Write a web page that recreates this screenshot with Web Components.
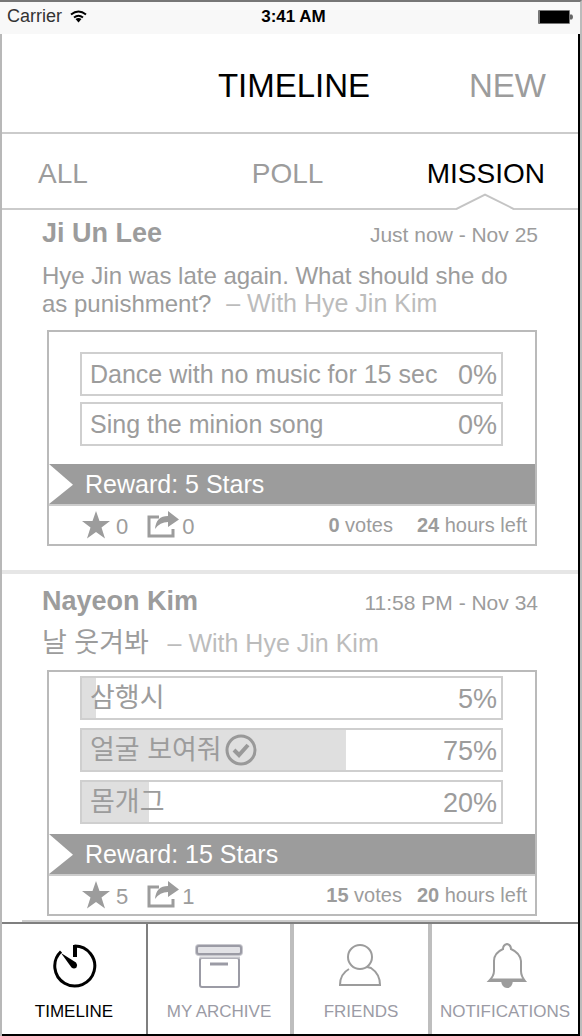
<!DOCTYPE html>
<html lang="en">
<head>
<meta charset="utf-8">
<meta name="viewport" content="width=device-width, initial-scale=1">
<title>Timeline</title>
<style>
  html, body { margin: 0; }
  body {
    font-family: "Liberation Sans", "Noto Sans CJK KR", sans-serif;
    color: #9c9c9c;
    background: #fff;
  }
</style>
</head>
<body>
<timeline-app></timeline-app>

<script>
function define(name, html, setup) {
  const template = document.createElement("template");
  template.innerHTML = html;
  customElements.define(name, class extends HTMLElement {
    connectedCallback() {
      if (this.shadowRoot) return;
      this.attachShadow({ mode: "open" }).append(template.content.cloneNode(true));
      if (setup) setup(this, this.shadowRoot);
    }
  });
}

define("status-bar", `
  <style>
    :host { display: grid; grid-template-columns: 1fr auto 1fr; align-items: center;
      padding: 0 6px 3px 7px; background: #f8f8f8; border-top: 2px solid #767676;
      border-right: 2px solid #bbb; box-sizing: border-box; height: 34px; color: #000; }
    .carrier { display: flex; align-items: center; gap: 8px; font-size: 18px; color: #333; }
    .time { font-size: 17px; font-weight: bold; padding-left: 6px; }
    .battery { justify-self: end; }
    svg { display: block; }
  </style>
  <div class="carrier"><span>Carrier</span>
    <svg width="17" height="13" viewBox="0 0 17 13" fill="none" stroke="#000" stroke-width="2">
      <path d="M1 4.5Q8.500-1.500 16 4.500"/><path d="M4 7.500Q8.500 4 13 7.500"/><path d="M5.500 9L8.500 12.500L11.500 9Q8.500 7 5.500 9Z" fill="#000" stroke="none"/>
    </svg></div>
  <div class="time">3:41 AM</div>
  <svg class="battery" width="36" height="14" viewBox="0 0 36 14">
    <rect x="0" y="0" width="32" height="14" rx="1" fill="#777"/><rect x="2" y="1" width="29" height="12" fill="#000"/>
    <path d="M32 4.500h2q2 2.500 0 5h-2z" fill="#666"/>
  </svg>`);

define("title-bar", `
  <style>
    :host { display: grid; grid-template-columns: 1fr auto 1fr; align-items: center; height: 100px;
      box-sizing: border-box; padding: 6px 32px 0 40px; border-bottom: 2px solid #cbcbcb; font-size: 33px; }
    h1 { grid-column: 2; margin: 0; font-size: 33px; font-weight: normal; color: #000; }
    button { justify-self: end; font: inherit; color: inherit; background: none; border: 0; padding: 0; }
  </style>
  <h1>TIMELINE</h1><button type="button">NEW</button>`);

define("feed-tabs", `
  <style>
    nav { display: grid; grid-template-columns: 27fr auto 28fr; align-items: center; height: 76px;
      box-sizing: border-box; padding: 6px 33px 0 36px; border-bottom: 2px solid #cbcbcb; font-size: 28px; }
    :host { display: block; }
    a { position: relative; justify-self: start; color: inherit; text-decoration: none; line-height: 68px; }
    a:last-child { justify-self: end; color: #000; }
    svg { position: absolute; left: 50%; bottom: -2px; margin-left: -30px; }
  </style>
  <nav><a href="#all">ALL</a><a href="#poll">POLL</a><a href="#mission" aria-current="page">MISSION
    <svg width="58" height="17" viewBox="0 0 58 17"><path d="M0 17L29 2L58 17" fill="#fff"/><path d="M0 16L29 1.500L58 16" fill="none" stroke="#c4c4c4" stroke-width="2"/></svg>
  </a></nav>`);

define("feed-post", `
  <style>
    :host { display: block; padding: 8px 40px 0; }
    header { display: flex; justify-content: space-between; align-items: baseline; height: 30px; line-height: 30px; }
    h2 { margin: 0; font-size: 27px; }
    .date { font-size: 21px; }
    p { margin: 14px 0 12px; font-size: 24px; line-height: 28px; max-width: 480px; min-height: 28px; }
    ::slotted([slot="with"]) { font-size: 25px; line-height: 20px; color: #bcbcbc; margin-left: 8px; white-space: nowrap; }
    ::slotted([slot="message"]:lang(ko)) { font-size: 27px; line-height: 20px; margin-right: 4px; }
  </style>
  <header><h2><slot name="author"></slot></h2><span class="date"><slot name="date"></slot></span></header>
  <p><slot name="message"></slot> <slot name="with"></slot></p>
  <slot></slot>`);

define("mission-card", `
  <style>
    :host { display: block; margin: 0 1px 0 5px; border: 2px solid #bababa; }
    .options { display: flex; flex-direction: column; gap: var(--gap, 6px); padding: var(--top, 20px) 32px var(--bottom, 18px) 31px; }
    .reward { display: flex; align-items: center; gap: 12px; height: 40px; background: #9c9c9c; color: #fff;
      font-size: 25px; border-bottom: 2px solid #ccc; }
    .reward::before { content: ""; width: 24px; height: 40px; background: #fff; clip-path: polygon(0 0, 100% 52%, 0 100%); }
    footer { display: flex; align-items: center; height: 38px; padding: 0 8px 0 32px; font-size: 20px; }
    button { display: flex; align-items: center; gap: 5px; padding: 0; border: 0; margin-right: 18px;
      background: none; color: inherit; font: inherit; font-size: 22px; height: 38px; }
    button span { padding-top: 4px; }
    button + button { margin-right: auto; gap: 2px; }
    .votes { margin-right: var(--space, 24px); }
    svg { display: block; }
  </style>
  <div class="options"><slot></slot></div>
  <div class="reward"><slot name="reward"></slot></div>
  <footer>
    <button type="button" aria-label="Stars"><svg width="30" height="30" viewBox="0 0 30 30"><path fill="#9c9c9c" d="M15 1L18.500 11H29L20.500 17.500L24 28.500L15 22L6 28.500L9.500 17.500L1 11H11.500Z"/></svg><span><slot name="stars"></slot></span></button>
    <button type="button" aria-label="Shares"><svg width="34" height="30" viewBox="0 0 34 30"><path d="M13 7H3V26H27V19" fill="none" stroke="#9c9c9c" stroke-width="3"/><path fill="#9c9c9c" d="M9 19Q10 6 22 6V1L33 9.500L22 17V12Q14 12 9 19Z"/></svg><span><slot name="shares"></slot></span></button>
    <span class="votes"><slot name="votes"></slot></span><span><slot name="left"></slot></span>
  </footer>`);

define("mission-option", `
  <style>
    :host { display: flex; align-items: center; height: 44px; box-sizing: border-box; border: 2px solid #cfcfcf;
      padding: 0 4px 0 8px; font-size: 25px;
      background: linear-gradient(#dfdfdf, #dfdfdf) no-repeat 0 0 / var(--fill, 0) 100%; }
    :host(:lang(ko)) { font-size: 27px; line-height: 40px; }
    .label { white-space: nowrap; }
    .percent { margin-left: auto; font-size: 27px; padding-top: 2px; }
    svg { display: none; margin-left: 3px; }
    :host([chosen]) svg { display: block; }
  </style>
  <span class="label"><slot></slot></span>
  <svg width="32" height="32" viewBox="0 0 32 32" fill="none" stroke="#999" role="img" aria-label="Chosen">
    <circle cx="16" cy="16" r="14" stroke-width="3"/><path d="M9 16L14 21L23 11" stroke-width="4"/></svg>
  <span class="percent"></span>`,
  (host, root) => { root.querySelector(".percent").textContent = host.getAttribute("percent") + "%"; });

define("nav-item", `
  <style>
    :host { display: block; box-sizing: border-box; border-right: 4px solid #bebebe; color: #9b9ba5; min-width: 0; }
    :host([active]) { color: #000; border-right: 2px solid #7f7f7f; }
    :host(:last-child) { border-right: 0; }
    a { display: flex; flex-direction: column; align-items: center; padding-top: 18px; gap: 12px; height: 110px;
      box-sizing: border-box; color: inherit; text-decoration: none; font-size: 17px; line-height: 20px; white-space: nowrap; }
    ::slotted(svg) { display: block; width: 48px; height: 48px; fill: none; }
  </style>
  <a href="#"><slot name="icon"></slot><span><slot></slot></span></a>`);

define("bottom-nav", `
  <style>
    :host { display: block; border-top: 2px solid #7f7f7f; border-bottom: 2px solid #000; }
    nav { display: grid; grid-template-columns: 146fr 146fr 138fr 146fr; }
  </style>
  <nav>
    <nav-item active><svg slot="icon" viewBox="0 0 48 48" stroke="#000" stroke-width="3">
      <path d="M24.500 4A20 20 0 1 1 11 9.500"/><path d="M25 3V15" stroke-width="4"/><path fill="#000" stroke="none" d="M11 11L26 20.500Q28 23 26.500 25.500Q24 27.500 21.500 25.500Z"/></svg>TIMELINE</nav-item>
    <nav-item><svg slot="icon" viewBox="0 0 48 48" stroke="#9b9ba5" stroke-width="2">
      <rect x="1" y="3" width="46" height="10" rx="3" fill="#e2e2e6" stroke="#c8c8ce"/><rect x="2" y="4" width="44" height="8" rx="2" fill="#e2e2e6"/>
      <rect x="5" y="16" width="39" height="29" rx="2"/><path d="M4.500 15.500H45" stroke="#c8c8ce"/><path d="M15 22H33" stroke-width="3"/></svg>MY ARCHIVE</nav-item>
    <nav-item><svg slot="icon" viewBox="0 0 48 48" stroke="#9c9c9c" stroke-width="2">
      <circle cx="23" cy="15" r="12"/><path d="M12 27Q3 32 3 43H43Q43 32 34 26L30 25"/></svg>FRIENDS</nav-item>
    <nav-item><svg slot="icon" viewBox="0 0 48 48" stroke="#9c9c9c" stroke-width="2">
      <path d="M26 2Q22 3 22 7Q13 11 13 19V29Q13 34 8 39H44Q40 34 40 29V19Q39 11 30 7Q30 3 26 2Z"/><path d="M9 38H43" stroke-width="3"/><path d="M20 39H32Q31 46 26 46Q21 46 20 39Z" fill="#9c9c9c" stroke="none"/></svg>NOTIFICATIONS</nav-item>
  </nav>`);

define("timeline-app", `
  <style>
    :host { display: flex; flex-direction: column; min-height: 100vh; }
    .screen { flex: 1; display: flex; flex-direction: column; border-left: 2px solid #b8b8b8;
      border-right: 2px solid #bbb; }
    .page { flex: 1; display: flex; flex-direction: column; border-right: 2px solid #000; }
    main { flex: 1; }
    feed-post { padding-bottom: 24px; border-bottom: 4px solid #e6e6e6; }
    feed-post:last-child { padding-top: 12px; padding-bottom: 4px; border: 0; }
    feed-post:last-child::after { content: ""; display: block; height: 2px; background: #ccc; margin: 4px -2px -4px -20px; }
    .compact { --top: 4px; --gap: 8px; --bottom: 10px; --space: 15px; }
  </style>
  <status-bar></status-bar>
  <div class="screen"><div class="page">
    <title-bar></title-bar>
    <feed-tabs></feed-tabs>
    <main>
      <feed-post>
        <span slot="author">Ji Un Lee</span><span slot="date">Just now - Nov 25</span>
        <span slot="message"><span>Hye Jin was late again. What should she do</span> <span>as punishment?</span></span>
        <span slot="with">– With Hye Jin Kim</span>
        <mission-card>
          <mission-option percent="0">Dance with no music for 15 sec</mission-option>
          <mission-option percent="0">Sing the minion song</mission-option>
          <span slot="reward">Reward: 5 Stars</span>
          <span slot="stars">0</span><span slot="shares">0</span>
          <span slot="votes"><b>0</b> votes</span><span slot="left"><b>24</b> hours left</span>
        </mission-card>
      </feed-post>
      <feed-post>
        <span slot="author">Nayeon Kim</span><span slot="date">11:58 PM - Nov 34</span>
        <span slot="message" lang="ko">날 웃겨봐</span>
        <span slot="with">– With Hye Jin Kim</span>
        <mission-card class="compact">
          <mission-option lang="ko" percent="5" style="--fill: 14px">삼행시</mission-option>
          <mission-option lang="ko" percent="75" style="--fill: 63%" chosen>얼굴 보여줘</mission-option>
          <mission-option lang="ko" percent="20" style="--fill: 16%">몸개그</mission-option>
          <span slot="reward">Reward: 15 Stars</span>
          <span slot="stars">5</span><span slot="shares">1</span>
          <span slot="votes"><b>15</b> votes</span><span slot="left"><b>20</b> hours left</span>
        </mission-card>
      </feed-post>
    </main>
    <bottom-nav></bottom-nav>
  </div></div>`);
</script>
</body>
</html>
